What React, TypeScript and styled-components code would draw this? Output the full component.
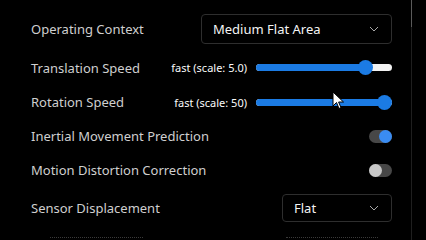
import React from "react";
import styled, { createGlobalStyle } from "styled-components";

const Global = createGlobalStyle`
  html, body { margin: 0; padding: 0; background: #000; }
  body { font-family: "Noto Sans", "Open Sans", sans-serif; overflow: hidden; }
`;

const Page = styled.div`
  display: flex;
  width: 426px;
  height: 240px;
  background: #000;
  position: relative;
  overflow: hidden;
`;

const Panel = styled.div`
  width: 361px;
  padding: 14px 19px 0 31px;
  display: flex;
  flex-direction: column;
`;

const ScrollTrack = styled.div`
  width: 1px;
  height: 240px;
  background: #1f1f1f;
  display: flex;
  flex-direction: column;
`;

const ScrollThumb = styled.div`
  width: 1px;
  height: 27px;
  background: #5a5a5a;
`;

const Row = styled.div<{ $h: number; $mt?: number }>`
  display: flex;
  align-items: center;
  height: ${(p) => p.$h}px;
  margin-top: ${(p) => p.$mt ?? 0}px;
  flex-shrink: 0;
`;

const Label = styled.span`
  flex: 1;
  font-size: 13px;
  color: #cfcfcf;
  white-space: nowrap;
`;

const Select = styled.div<{ $w: number; $h: number }>`
  width: ${(p) => p.$w}px;
  height: ${(p) => p.$h}px;
  box-sizing: border-box;
  border: 1px solid #2e2e2e;
  border-radius: 4px;
  display: flex;
  align-items: center;
  justify-content: space-between;
  padding: 0 12px 0 11px;
  color: #f4f4f4;
  font-size: 13px;
`;

const SliderGroup = styled.div`
  display: flex;
  align-items: center;
  gap: 9px;
`;

const Value = styled.span`
  font-size: 11px;
  font-weight: 400;
  color: #fafafa;
  white-space: nowrap;
`;

const Track = styled.div`
  position: relative;
  width: 136px;
  height: 7px;
  border-radius: 4px;
  background: #f2f2f2;
`;

const Fill = styled.div`
  position: absolute;
  left: 0;
  top: 0;
  bottom: 0;
  border-radius: 4px;
  background: #1b7be4;
`;

const Thumb = styled.div`
  position: absolute;
  top: 50%;
  width: 15px;
  height: 15px;
  margin: -7.5px 0 0 -7.5px;
  border-radius: 50%;
  background: #1b7be4;
`;

const Toggle = styled.div<{ $on: boolean }>`
  width: 23px;
  height: 13px;
  border-radius: 7px;
  background: #474747;
  display: flex;
  justify-content: ${(p) => (p.$on ? "flex-end" : "flex-start")};
`;

const Knob = styled.div<{ $on: boolean }>`
  width: 13px;
  height: 13px;
  border-radius: 50%;
  background: ${(p) => (p.$on ? "#3a8cf2" : "#c8c8c8")};
`;

const Ghost = styled.div<{ $w: number; $ml: number }>`
  width: ${(p) => p.$w}px;
  margin-left: ${(p) => p.$ml}px;
  height: 10px;
  border-top: 1px dotted #3a3a3a;
`;

const GhostRow = styled.div`
  display: flex;
  margin-top: 15px;
`;

const Cursor = styled.svg`
  position: absolute;
  left: 332px;
  top: 91px;
`;

const Chevron = () => (
  <svg width="10" height="6" viewBox="0 0 10 6">
    <polyline points="1,1 5,5 9,1" fill="none" stroke="#a8a8a8" strokeWidth="1" />
  </svg>
);

const Slider = ({ value }: { value: number }) => {
  const pos = 7.5 + value * 121;
  return (
    <Track>
      <Fill style={{ width: pos }} />
      <Thumb style={{ left: pos }} />
    </Track>
  );
};

export default function App() {
  return (
    <Page>
      <Global />
      <Panel>
        <Row $h={30}>
          <Label>Operating Context</Label>
          <Select $w={191} $h={30}>
            <span>Medium Flat Area</span>
            <Chevron />
          </Select>
        </Row>
        <Row $h={35} $mt={6}>
          <Label>Translation Speed</Label>
          <SliderGroup>
            <Value>fast (scale: 5.0)</Value>
            <Slider value={0.847} />
          </SliderGroup>
        </Row>
        <Row $h={34}>
          <Label>Rotation Speed</Label>
          <SliderGroup>
            <Value>fast (scale: 50)</Value>
            <Slider value={1} />
          </SliderGroup>
        </Row>
        <Row $h={34}>
          <Label>Inertial Movement Prediction</Label>
          <Toggle $on>
            <Knob $on />
          </Toggle>
        </Row>
        <Row $h={34}>
          <Label>Motion Distortion Correction</Label>
          <Toggle $on={false}>
            <Knob $on={false} />
          </Toggle>
        </Row>
        <Row $h={28} $mt={7}>
          <Label>Sensor Displacement</Label>
          <Select $w={110} $h={28}>
            <span>Flat</span>
            <Chevron />
          </Select>
        </Row>
        <GhostRow>
          <Ghost $w={93} $ml={19} />
          <Ghost $w={92} $ml={143} />
        </GhostRow>
      </Panel>
      <ScrollTrack>
        <ScrollThumb />
      </ScrollTrack>
      <Cursor width="13" height="19" viewBox="0 0 13 19">
        <path d="M1 1 L1 15 L4.5 11.5 L7 17.5 L9 16.6 L6.6 11 L11.5 11 Z" fill="#fff" stroke="#000" strokeWidth="1" />
      </Cursor>
    </Page>
  );
}
